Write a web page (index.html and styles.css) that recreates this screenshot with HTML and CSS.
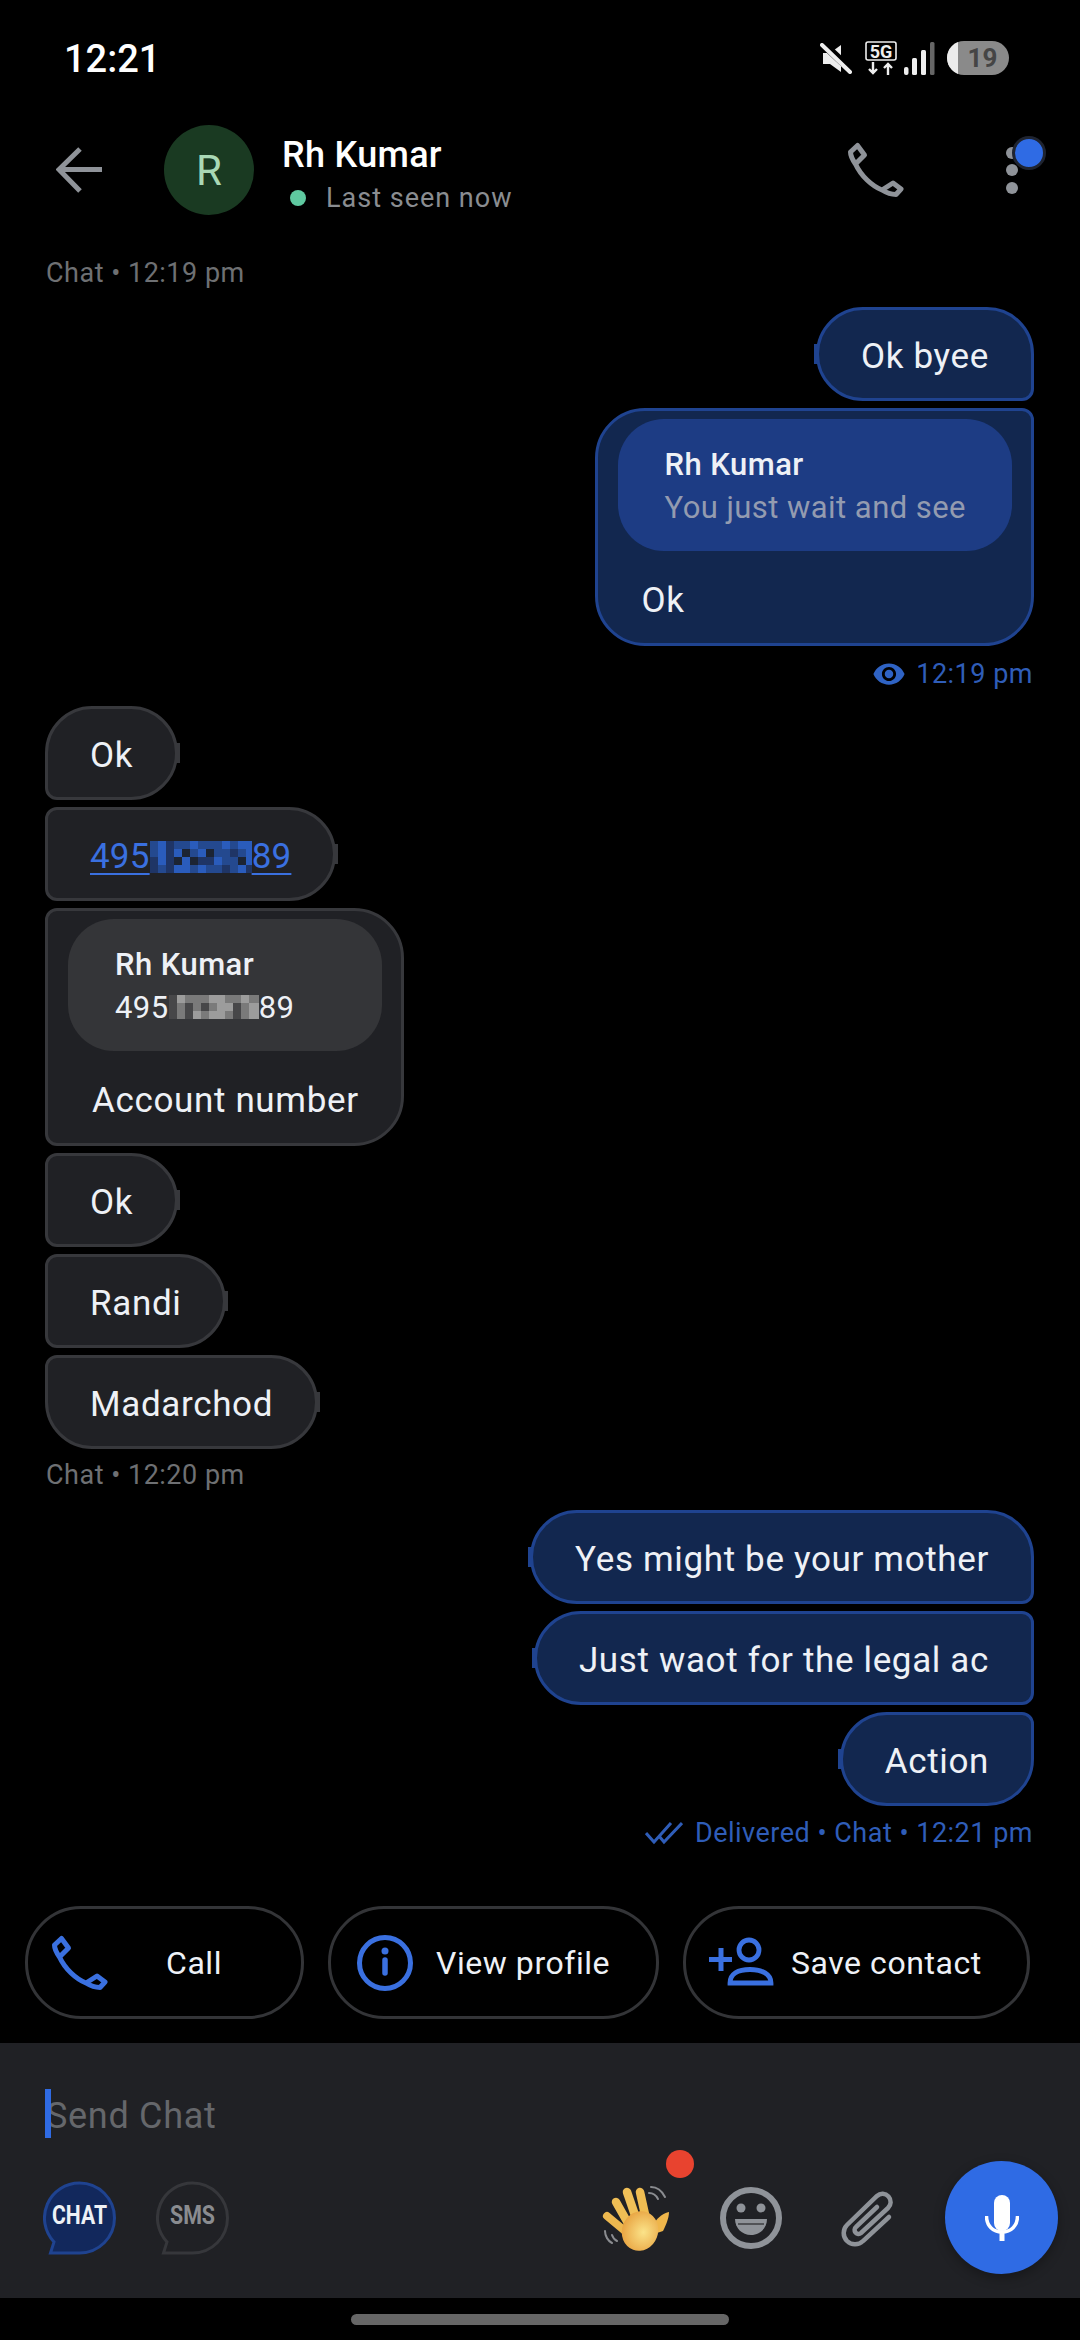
FILE: index.html
```html
<!DOCTYPE html>
<html lang="en">

<head>
    <meta charset="UTF-8">
    <meta name="viewport" content="width=device-width, initial-scale=1.0">
    <title>Rh Kumar</title>
    <link rel="stylesheet" href="styles.css">
</head>

<body>
    <svg class="sprites" width="0" height="0">
        <symbol id="phone" viewBox="0 0 60 60">
            <path d="M9.5 24C6 19 4.5 15.5 4.5 12L11.5 5.5 18.5 15 9.5 24C15 36 26 46 36 50L47 43 55 49 50 54.5C45 54.5 40 52.5 36 50" fill="none" stroke="currentColor" stroke-width="5" stroke-linejoin="round" stroke-linecap="round" />
        </symbol>
    </svg>

    <!-- Status bar -->
    <div class="status-bar">
        <span class="clock">12:21</span>
        <div class="status-icons">
            <svg class="ic-mute" width="32" height="31" viewBox="0 0 32 31">
                <path d="M3 10h7L21 2v27L10 21H3z" fill="#eee" />
                <path d="M1 -1L31 27" stroke="#000" stroke-width="8" />
                <path d="M2 2L30 29" stroke="#eee" stroke-width="4" stroke-linecap="round" />
            </svg>
            <svg class="ic-5g" width="32" height="35" viewBox="0 0 32 35">
                <rect x="1" y="1" width="30" height="18" rx="2" fill="none" stroke="#eee" stroke-width="1.6" />
                <text class="five-g" x="16" y="16.500" text-anchor="middle">5G</text>
                <path d="M8 21v11M4 28l4 4 4-4M23 34V23M19 27l4-4 4 4" fill="none" stroke="#eee" stroke-width="2.4" />
            </svg>
            <svg class="ic-signal" width="32" height="34" viewBox="0 0 32 34">
                <rect x="1" y="25" width="4.5" height="8" rx="2" fill="#eee" />
                <rect x="9" y="16" width="5" height="17" rx="1.5" fill="#eee" />
                <rect x="18" y="8" width="5" height="25" rx="1.5" fill="#eee" />
                <rect x="27" y="0" width="4.5" height="33" rx="1.5" fill="#666" />
            </svg>
            <div class="battery"><span class="battery-fill"></span><span class="battery-num">19</span></div>
        </div>
    </div>

    <!-- Header -->
    <header class="top-bar">
        <svg class="back" width="48" height="46" viewBox="0 0 48 46">
            <path d="M46 22.500H4M24 2L3 22.500 24 44" fill="none" stroke="#8f9399" stroke-width="5" />
        </svg>
        <div class="avatar">R</div>
        <div class="who">
            <div class="who-name">Rh Kumar</div>
            <div class="who-status"><span class="online-dot"></span>Last seen now</div>
        </div>
        <svg class="top-phone"><use href="#phone" /></svg>
        <div class="menu">
            <span class="menu-dot"></span>
            <span class="menu-dot"></span>
            <span class="menu-dot"></span>
            <span class="menu-badge"></span>
        </div>
    </header>

    <!-- Messages -->
    <main class="chat">
        <div class="stamp">Chat • 12:19 pm</div>

        <div class="bubble out sq-br">Ok byee</div>
        <div class="bubble out reply sq-tr">
            <div class="quote">
                <div class="quote-name">Rh Kumar</div>
                <div class="quote-text">You just wait and see</div>
            </div>
            <div class="reply-text">Ok</div>
        </div>
        <div class="meta">
            <svg width="34" height="34" viewBox="0 0 24 24">
                <path d="M12 4.500C7 4.500 2.730 7.610 1 12c1.730 4.390 6 7.500 11 7.500s9.270-3.110 11-7.500c-1.730-4.390-6-7.500-11-7.500zM12 17c-2.760 0-5-2.240-5-5s2.240-5 5-5 5 2.240 5 5-2.240 5-5 5zm0-8c-1.660 0-3 1.340-3 3s1.340 3 3 3 3-1.340 3-3-1.340-3-3-3z" fill="#2f63c4" />
            </svg>
            <span>12:19 pm</span>
        </div>

        <div class="bubble in sq-bl">Ok</div>
        <div class="bubble in sq-tl sq-bl">
            <span class="link">495</span><svg class="blur-link" width="102" height="32" viewBox="0 0 102 32" shape-rendering="crispEdges">
                <rect width="102" height="32" fill="#24498f" />
                <path d="M8 4h8M40 4h8M72 4h8M88 4h16M8 12h8M24 12h8M48 12h8M96 12h8M8 20h8M32 20h8M64 20h8M96 20h8M24 28h16M48 28h8M88 28h8" stroke="#2a5cbc" stroke-width="8" />
                <path d="M16 4h8M16 12h8M80 12h8M0 20h8M16 20h8M48 20h16M0 28h8M16 28h8M72 28h8M96 28h8" stroke="#1f3566" stroke-width="8" />
                <path d="M32 12h8M56 12h8M24 20h8M40 20h8M88 20h8" stroke="#1c2433" stroke-width="8" />
            </svg><span class="link">89</span>
        </div>
        <div class="bubble in reply sq-tl sq-bl">
            <div class="quote">
                <div class="quote-name">Rh Kumar</div>
                <div class="quote-num">495<svg class="blur-num" width="90" height="24" viewBox="0 0 90 24" shape-rendering="crispEdges">
                        <rect width="90" height="24" fill="#7a7a7a" />
                        <path d="M8 4h8M40 4h16M72 4h8M48 12h16M80 12h10M24 20h8M40 20h16M80 20h10" stroke="#9c9c9c" stroke-width="8" />
                        <path d="M0 4h8M0 12h8M0 20h8M16 12h8M32 12h8M64 12h8M16 20h8M64 20h8" stroke="#474749" stroke-width="8" />
                    </svg>89</div>
            </div>
            <div class="reply-text">Account number</div>
        </div>
        <div class="bubble in sq-tl sq-bl">Ok</div>
        <div class="bubble in sq-tl sq-bl">Randi</div>
        <div class="bubble in sq-tl">Madarchod</div>

        <div class="stamp stamp-mid">Chat • 12:20 pm</div>

        <div class="bubble out sq-br">Yes might be your mother</div>
        <div class="bubble out sq-tr sq-br">Just waot for the legal ac</div>
        <div class="bubble out sq-tr">Action</div>
        <div class="meta meta-last">
            <svg width="38" height="24" viewBox="0 0 38 24">
                <path d="M1 12l8 9L26 2M14 15l5 6L37 2" fill="none" stroke="#2f5db8" stroke-width="3" />
            </svg>
            <span>Delivered • Chat • 12:21 pm</span>
        </div>
    </main>

    <!-- Suggested actions -->
    <div class="chips">
        <div class="chip chip-call">
            <svg class="chip-icon"><use href="#phone" /></svg>
            <span>Call</span>
        </div>
        <div class="chip chip-view">
            <svg class="chip-icon" viewBox="0 0 60 60">
                <circle cx="30" cy="30" r="25.500" fill="none" stroke="currentColor" stroke-width="5" />
                <circle cx="30" cy="18" r="3.500" fill="currentColor" />
                <path d="M30 27v13" stroke="currentColor" stroke-width="5.500" stroke-linecap="round" />
            </svg>
            <span>View profile</span>
        </div>
        <div class="chip chip-save">
            <svg class="chip-icon-wide" width="66" height="54" viewBox="0 0 66 54">
                <circle cx="40" cy="14" r="10" fill="none" stroke="currentColor" stroke-width="4.800" />
                <path d="M21 47C21 38 29 33.500 41 33.500S62 38 62 47z" fill="none" stroke="currentColor" stroke-width="4.800" />
                <path d="M12 12v23M0 23.500h23" stroke="currentColor" stroke-width="5" />
            </svg>
            <span>Save contact</span>
        </div>
    </div>

    <!-- Composer -->
    <footer class="composer">
        <div class="input-row">
            <span class="caret"></span>
            <span class="placeholder">Send Chat</span>
        </div>
        <div class="tools">
            <svg class="mode" width="74" height="74" viewBox="0 0 74 74">
                <path d="M36.500 2a35 35 0 1 1 0 70H7.500L11 61A35 35 0 0 1 36.500 2z" fill="#12285c" stroke="#1f4390" stroke-width="3" />
                <text class="mode-label mode-on" x="36.500" y="43" text-anchor="middle" textLength="55" lengthAdjust="spacingAndGlyphs">CHAT</text>
            </svg>
            <svg class="mode mode-sms" width="74" height="74" viewBox="0 0 74 74">
                <path d="M36.500 2a35 35 0 1 1 0 70H7.500L11 61A35 35 0 0 1 36.500 2z" fill="none" stroke="#36373b" stroke-width="3" />
                <text class="mode-label mode-off" x="36.500" y="43" text-anchor="middle" textLength="45" lengthAdjust="spacingAndGlyphs">SMS</text>
            </svg>

            <div class="wave">
                <svg width="72" height="70" viewBox="0 0 72 70">
                    <defs>
                        <radialGradient id="skin" cx="0.600" cy="0.500" r="0.650">
                            <stop offset="0" stop-color="#fbe389" />
                            <stop offset="1" stop-color="#e79f3c" />
                        </radialGradient>
                    </defs>
                    <g stroke-linecap="round" fill="none">
                        <path d="M6 31L24 46" stroke-width="8" stroke="#edb84f" />
                        <path d="M15 17L28 40" stroke-width="8.500" stroke="#efbe55" />
                        <path d="M26 7L36 36" stroke-width="8.500" stroke="#f0c058" />
                        <path d="M39 7L45 34" stroke-width="8.500" stroke="#f0bd52" />
                    </g>
                    <path d="M68 27C63 28 57 32 54 37L50 50 62 46C65 40 68 33 68 27z" fill="#efb64b" />
                    <ellipse cx="39" cy="46" rx="18" ry="20" transform="rotate(20 39 46)" fill="url(#skin)" />
                    <path d="M48 8c4 0 7 2 9 6M50 2c6 0 11 4 14 10M4 46c0 5 3 10 7 12M11 50c1 3 3 5 5 6" fill="none" stroke="#8a8c90" stroke-width="2" stroke-linecap="round" />
                </svg>
                <span class="wave-dot"></span>
            </div>

            <svg class="smile" width="62" height="62" viewBox="0 0 62 62">
                <circle cx="31" cy="31" r="28" fill="none" stroke="#8f9399" stroke-width="6" />
                <circle cx="21" cy="21" r="4.500" fill="#8f9399" />
                <circle cx="41" cy="21" r="4.500" fill="#8f9399" />
                <path d="M15 32h32c0 9-7 16-16 16S15 41 15 32z" fill="#8f9399" />
                <path d="M18 37h26" stroke="#3c3e42" stroke-width="1.500" />
            </svg>

            <svg class="clip" width="56" height="60" viewBox="0 0 56 60">
                <path d="M50 29L24 53A11 11 0 0 1 8 37L38 8A8 8 0 0 1 49 20L22 45A3 3 0 0 1 17 39L38 19" fill="none" stroke="#8f9399" stroke-width="4.500" stroke-linecap="round" />
            </svg>

            <div class="mic">
                <svg width="34" height="50" viewBox="0 0 34 50">
                    <rect x="9" y="2" width="16" height="36" rx="8" fill="#fff" />
                    <path d="M1.500 23C1.500 33 8 39 17 39S32.500 33 32.500 23" fill="none" stroke="#fff" stroke-width="3.500" />
                    <rect x="14.500" y="38" width="5" height="10" fill="#fff" />
                </svg>
            </div>
        </div>
    </footer>

    <div class="home-area"><span class="home-bar"></span></div>
</body>

</html>
```

FILE: styles.css
```css
* {
    box-sizing: border-box;
}

html,
body {
    margin: 0;
    padding: 0;
}

body {
    width: 1080px;
    height: 2340px;
    display: flex;
    flex-direction: column;
    background-color: #000;
    color: #eef1f6;
    font-family: Roboto, "Noto Sans", sans-serif;
    overflow: hidden;
}

.sprites {
    position: absolute;
}

/* Status bar */

.status-bar {
    height: 100px;
    display: flex;
    justify-content: space-between;
    align-items: flex-start;
    padding: 36px 71px 0 64px;
}

.clock {
    font-size: 38px;
    font-weight: 500;
    line-height: 46px;
    color: #fff;
}

.status-icons {
    display: flex;
    align-items: flex-start;
    padding-top: 5px;
}

.ic-mute {
    margin-top: 2px;
}

.ic-5g {
    margin-left: 13px;
}

.five-g {
    font-size: 18px;
    font-weight: 700;
    fill: #eee;
}

.ic-signal {
    margin-left: 6px;
    margin-top: 1px;
}

.battery {
    position: relative;
    width: 62px;
    height: 34px;
    margin-left: 12px;
    border-radius: 17px;
    background: #8a8a8a;
    overflow: hidden;
    text-align: center;
    padding-left: 9px;
}

.battery-fill {
    position: absolute;
    left: 0;
    top: 0;
    width: 11px;
    height: 34px;
    background: #ececec;
}

.battery-num {
    font-size: 26px;
    font-weight: 700;
    line-height: 34px;
    color: #454545;
}

/* Header */

.top-bar {
    height: 140px;
    display: flex;
    align-items: center;
    padding-left: 56px;
}

.back {
    flex: none;
}

.avatar {
    width: 90px;
    height: 90px;
    margin-left: 60px;
    border-radius: 50%;
    background: #1a3a22;
    color: #a9d8b5;
    font-size: 42px;
    line-height: 92px;
    text-align: center;
}

.who {
    margin-left: 28px;
    padding-top: 9px;
}

.who-name {
    font-size: 36px;
    font-weight: 500;
    line-height: 44px;
    letter-spacing: 0.3px;
    color: #fff;
}

.who-status {
    display: flex;
    align-items: center;
    font-size: 27px;
    line-height: 38px;
    margin-top: 2px;
    color: #8a8d91;
    letter-spacing: 1px;
}

.online-dot {
    width: 16px;
    height: 16px;
    margin: 0 20px 0 8px;
    border-radius: 50%;
    background: #5fc9a0;
}

.top-phone {
    width: 60px;
    height: 60px;
    margin-left: 334px;
    color: #8f9399;
}

.menu {
    position: relative;
    display: flex;
    flex-direction: column;
    gap: 5.5px;
    margin-left: 100px;
}

.menu-dot {
    width: 12px;
    height: 12px;
    border-radius: 50%;
    background: #8f9399;
}

.menu-badge {
    position: absolute;
    left: 6px;
    top: -11px;
    width: 34px;
    height: 34px;
    border-radius: 50%;
    border: 3px solid #1f2430;
    background: #2f6be4;
}

/* Messages */

.chat {
    flex: 1;
    display: flex;
    flex-direction: column;
    align-items: flex-start;
    gap: 7px;
    padding: 12px 46px 0 45px;
}

.stamp {
    font-size: 27px;
    line-height: 43px;
    letter-spacing: 0.5px;
    color: #6e7073;
    margin-bottom: 5px;
    padding-left: 1px;
}

.stamp-mid {
    margin-top: -2px;
    margin-bottom: 6px;
}

.bubble {
    position: relative;
    height: 94px;
    display: flex;
    align-items: center;
    padding: 5px 42px 0;
    border: 3px solid;
    border-radius: 47px;
    font-size: 35px;
    letter-spacing: 0.65px;
}

.bubble.in {
    background: #202125;
    border-color: #37383c;
}

.bubble.out {
    align-self: flex-end;
    background: #12274f;
    border-color: #1f4390;
}

/* little nub on the side of each bubble */
.bubble::before {
    content: "";
    position: absolute;
    top: 34px;
    width: 5px;
    height: 20px;
}

.bubble.in::before {
    right: -5px;
    background: #37383c;
}

.bubble.out::before {
    left: -5px;
    background: #1f4390;
}

.bubble.reply {
    display: block;
    height: 238px;
    padding: 8px 19px 0 20px;
    border-radius: 50px;
}

.bubble.reply::before {
    display: none;
}

.sq-tl {
    border-top-left-radius: 12px !important;
}

.sq-tr {
    border-top-right-radius: 12px !important;
}

.sq-br {
    border-bottom-right-radius: 12px !important;
}

.sq-bl {
    border-bottom-left-radius: 12px !important;
}

.quote {
    height: 132px;
    padding: 24px 46px 0 47px;
    border-radius: 46px;
    line-height: 43px;
    font-size: 31px;
    letter-spacing: 0.45px;
}

.in .quote {
    background: #343538;
}

.out .quote {
    background: #1d3c84;
}

.quote-name {
    font-weight: 500;
}

.quote-text {
    color: #939bb0;
    white-space: nowrap;
}

.quote-num {
    white-space: nowrap;
}

.blur-num {
    vertical-align: -1px;
}

.reply-text {
    margin-left: -20px;
    padding: 0 23px 0 44px;
    line-height: 100px;
    white-space: nowrap;
}

.link {
    color: #3a70e0;
    letter-spacing: 0.2px;
    text-decoration: underline;
    text-underline-offset: 5px;
    text-decoration-thickness: 2px;
}

.blur-link {
    vertical-align: -6px;
}

.meta {
    align-self: flex-end;
    display: flex;
    align-items: center;
    gap: 10px;
    height: 40px;
    margin: 1px 0 5px;
    padding-right: 1px;
    font-size: 27px;
    letter-spacing: 0.5px;
    color: #2f5db8;
}

.meta-last {
    gap: 12px;
    margin-top: 0;
}

/* Suggested actions */

.chips {
    display: flex;
    gap: 24px;
    padding: 0 25px;
    margin-bottom: 24px;
}

.chip {
    height: 113px;
    display: flex;
    align-items: center;
    border: 3px solid #333437;
    border-radius: 56px;
    font-size: 32px;
    letter-spacing: 0.55px;
    color: #eef1f6;
}

.chip-icon {
    width: 60px;
    height: 60px;
    flex: none;
    color: #3a70e0;
}

.chip-icon-wide {
    flex: none;
    color: #3a70e0;
}

.chip-call {
    width: 279px;
    padding-left: 22px;
    gap: 56px;
}

.chip-view {
    width: 331px;
    padding-left: 24px;
    gap: 21px;
}

.chip-save {
    width: 347px;
    padding-left: 23px;
    gap: 16px;
}

/* Composer */

.composer {
    height: 255px;
    background: #202125;
    padding-top: 46px;
}

.input-row {
    position: relative;
    height: 49px;
    padding-left: 46px;
    font-size: 36px;
    line-height: 54px;
    letter-spacing: 0.7px;
    color: #65676b;
}

.caret {
    position: absolute;
    left: 45px;
    top: 0;
    width: 6px;
    height: 49px;
    background: #2f6be4;
}

.tools {
    display: flex;
    align-items: center;
    height: 113px;
    margin-top: 23px;
    padding-left: 43px;
}

.mode-label {
    font-size: 25px;
    font-weight: 700;
}

.mode-on {
    fill: #eef1f6;
}

.mode-off {
    fill: #8a8c90;
}

.mode-sms {
    margin-left: 39px;
}

.wave {
    position: relative;
    width: 72px;
    height: 70px;
    margin-left: 371px;
    margin-top: 4px;
}

.wave-dot {
    position: absolute;
    left: 65px;
    top: -35px;
    width: 28px;
    height: 28px;
    border-radius: 50%;
    background: #e8432f;
}

.smile {
    margin-left: 47px;
}

.clip {
    margin-left: 57px;
}

.mic {
    width: 113px;
    height: 113px;
    margin-left: 50px;
    border-radius: 50%;
    background: #2f6be4;
    box-shadow: 0 4px 12px rgba(0, 0, 0, 0.3);
    display: flex;
    align-items: center;
    justify-content: center;
}

.home-area {
    height: 42px;
    display: flex;
    justify-content: center;
    padding-top: 16px;
}

.home-bar {
    width: 378px;
    height: 11px;
    border-radius: 6px;
    background: #666;
}
```
